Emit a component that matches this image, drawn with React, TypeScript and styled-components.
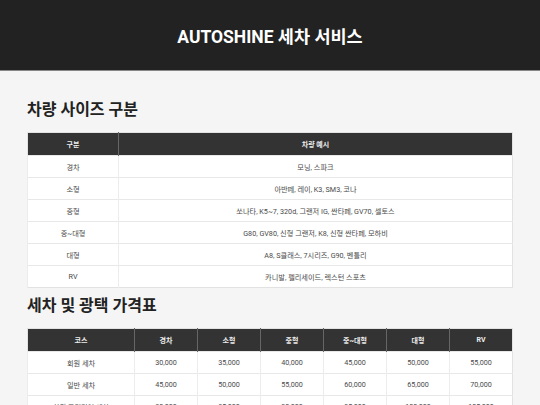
import styled, { createGlobalStyle } from "styled-components";

const GlobalStyle = createGlobalStyle`
  html, body {
    margin: 0;
    padding: 0;
    background: #f5f5f5;
    font-family: Roboto, "Noto Sans CJK KR", sans-serif;
    color: #333;
  }
`;

const Header = styled.header`
  height: 70px;
  background: #222;
  border-bottom: 1px solid #888;
  display: flex;
  align-items: center;
  justify-content: center;
`;

const Title = styled.h1`
  margin: 0;
  font-size: 17.5px;
  font-weight: 700;
  color: #fff;
`;

const Main = styled.main`
  padding: 29px 27px 0;
`;

const Section = styled.section`
  margin-bottom: 8px;
`;

const H2 = styled.h2`
  margin: 0 0 12px;
  font-size: 16px;
  line-height: 20px;
  font-weight: 700;
  color: #222;
`;

const Table = styled.table`
  width: 100%;
  border-collapse: collapse;
  table-layout: fixed;
  background: #fff;
  border: 1px solid #e2e2e2;
`;

const Th = styled.th<{ $w?: number }>`
  width: ${(p) => (p.$w ? `${p.$w}px` : "auto")};
  height: 22px;
  padding: 0;
  background: #333;
  color: #eee;
  font-size: 7px;
  font-weight: 700;
  border-left: 1px solid #666;
  &:first-child {
    border-left: none;
  }
`;

const Td = styled.td`
  height: 21px;
  padding: 0;
  text-align: center;
  font-size: 7.2px;
  color: #4a4a4a;
  border-top: 1px solid #e8e8e8;
  border-left: 1px solid #ececec;
`;

const sizes = [
  ["경차", "모닝, 스파크"],
  ["소형", "아반떼, 레이, K3, SM3, 코나"],
  ["중형", "쏘나타, K5~7, 320d, 그랜저 IG, 싼타페, GV70, 셀토스"],
  ["중~대형", "G80, GV80, 신형 그랜저, K8, 신형 싼타페, 모하비"],
  ["대형", "A8, S클래스, 7시리즈, G90, 벤틀리"],
  ["RV", "카니발, 펠리세이드, 렉스턴 스포츠"],
];

const priceCols = ["경차", "소형", "중형", "중~대형", "대형", "RV"];

const prices: [string, string[]][] = [
  ["회원 세차", ["30,000", "35,000", "40,000", "45,000", "50,000", "55,000"]],
  ["일반 세차", ["45,000", "50,000", "55,000", "60,000", "65,000", "70,000"]],
  ["회원 프리미엄 세차", ["80,000", "85,000", "90,000", "95,000", "100,000", "105,000"]],
];

const App = () => {
  return (
    <>
      <GlobalStyle />
      <Header>
        <Title>AUTOSHINE 세차 서비스</Title>
      </Header>
      <Main>
        <Section>
          <H2>차량 사이즈 구분</H2>
          <Table>
            <thead>
              <tr>
                <Th $w={90}>구분</Th>
                <Th>차량 예시</Th>
              </tr>
            </thead>
            <tbody>
              {sizes.map(([k, v]) => (
                <tr key={k}>
                  <Td>{k}</Td>
                  <Td>{v}</Td>
                </tr>
              ))}
            </tbody>
          </Table>
        </Section>
        <Section>
          <H2>세차 및 광택 가격표</H2>
          <Table>
            <thead>
              <tr>
                <Th $w={106}>코스</Th>
                {priceCols.map((c) => (
                  <Th key={c}>{c}</Th>
                ))}
              </tr>
            </thead>
            <tbody>
              {prices.map(([name, vals]) => (
                <tr key={name}>
                  <Td>{name}</Td>
                  {vals.map((v, i) => (
                    <Td key={i}>{v}</Td>
                  ))}
                </tr>
              ))}
            </tbody>
          </Table>
        </Section>
      </Main>
    </>
  );
};

export default App;
